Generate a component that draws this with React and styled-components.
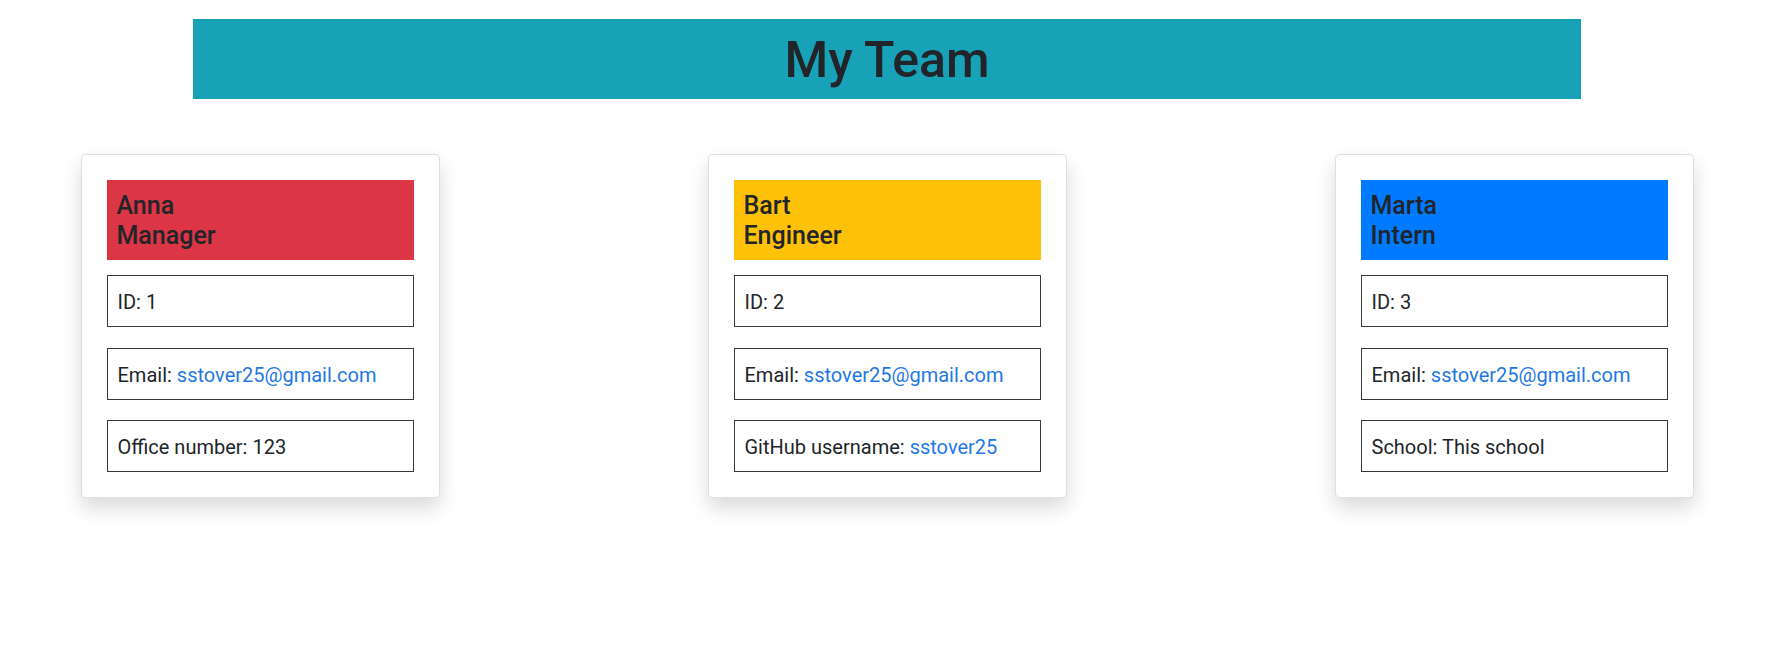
import React from "react";
import styled, { createGlobalStyle } from "styled-components";

const Global = createGlobalStyle`
  html, body { margin: 0; padding: 0; background: #fff; }
  body {
    font-family: Roboto, "Noto Sans", Arial, sans-serif;
    color: #212529;
    font-size: 20px;
    line-height: 1.5;
  }
  * { box-sizing: border-box; }
`;

const Page = styled.div`
  width: 1774px;
  padding: 19px 0 120px;
`;

const Banner = styled.header`
  width: 1388px;
  margin: 0 auto;
  background: #17a2b8;
  padding: 11px 0 9px;
  text-align: center;
`;

const Title = styled.h1`
  margin: 0;
  font-size: 50px;
  line-height: 60px;
  font-weight: 500;
  color: #212529;
`;

const CardRow = styled.main`
  width: 1613px;
  margin: 55px auto 0;
  display: flex;
  justify-content: space-between;
  align-items: flex-start;
`;

const Card = styled.section`
  width: 359px;
  background: #fff;
  border: 1px solid rgba(0, 0, 0, 0.125);
  border-radius: 5px;
  box-shadow: 0 10px 20px rgba(0, 0, 0, 0.15);
  padding: 25px;
  display: flex;
  flex-direction: column;
`;

const CardHead = styled.div`
  background: ${(p) => p.$color};
  padding: 11px 10px 9px;
  margin-bottom: 15px;
`;

const HeadLine = styled.h4`
  margin: 0;
  font-size: 25px;
  line-height: 30px;
  font-weight: 500;
  color: #212529;
`;

const InfoList = styled.ul`
  list-style: none;
  margin: 0;
  padding: 0;
  display: flex;
  flex-direction: column;
  gap: 20.5px;
`;

const InfoItem = styled.li`
  border: 1px solid #343a40;
  padding: 11px 10px 9px;
  font-size: 20px;
  line-height: 30px;
  height: 52px;
  white-space: nowrap;
`;

const Link = styled.a`
  color: #1f78e3;
  text-decoration: none;
`;

const team = [
  {
    name: "Anna",
    role: "Manager",
    color: "#dc3545",
    id: 1,
    extra: ["Office number: ", "123", false],
  },
  {
    name: "Bart",
    role: "Engineer",
    color: "#ffc107",
    id: 2,
    extra: ["GitHub username: ", "sstover25", true],
  },
  {
    name: "Marta",
    role: "Intern",
    color: "#007bff",
    id: 3,
    extra: ["School: ", "This school", false],
  },
];

export default function App() {
  return (
    <>
      <Global />
      <Page>
        <Banner>
          <Title>My Team</Title>
        </Banner>
        <CardRow>
          {team.map((m) => (
            <Card key={m.id}>
              <CardHead $color={m.color}>
                <HeadLine>{m.name}</HeadLine>
                <HeadLine>{m.role}</HeadLine>
              </CardHead>
              <InfoList>
                <InfoItem>ID: {m.id}</InfoItem>
                <InfoItem>
                  Email: <Link href="#">sstover25@gmail.com</Link>
                </InfoItem>
                <InfoItem>
                  {m.extra[0]}
                  {m.extra[2] ? <Link href="#">{m.extra[1]}</Link> : m.extra[1]}
                </InfoItem>
              </InfoList>
            </Card>
          ))}
        </CardRow>
      </Page>
    </>
  );
}
